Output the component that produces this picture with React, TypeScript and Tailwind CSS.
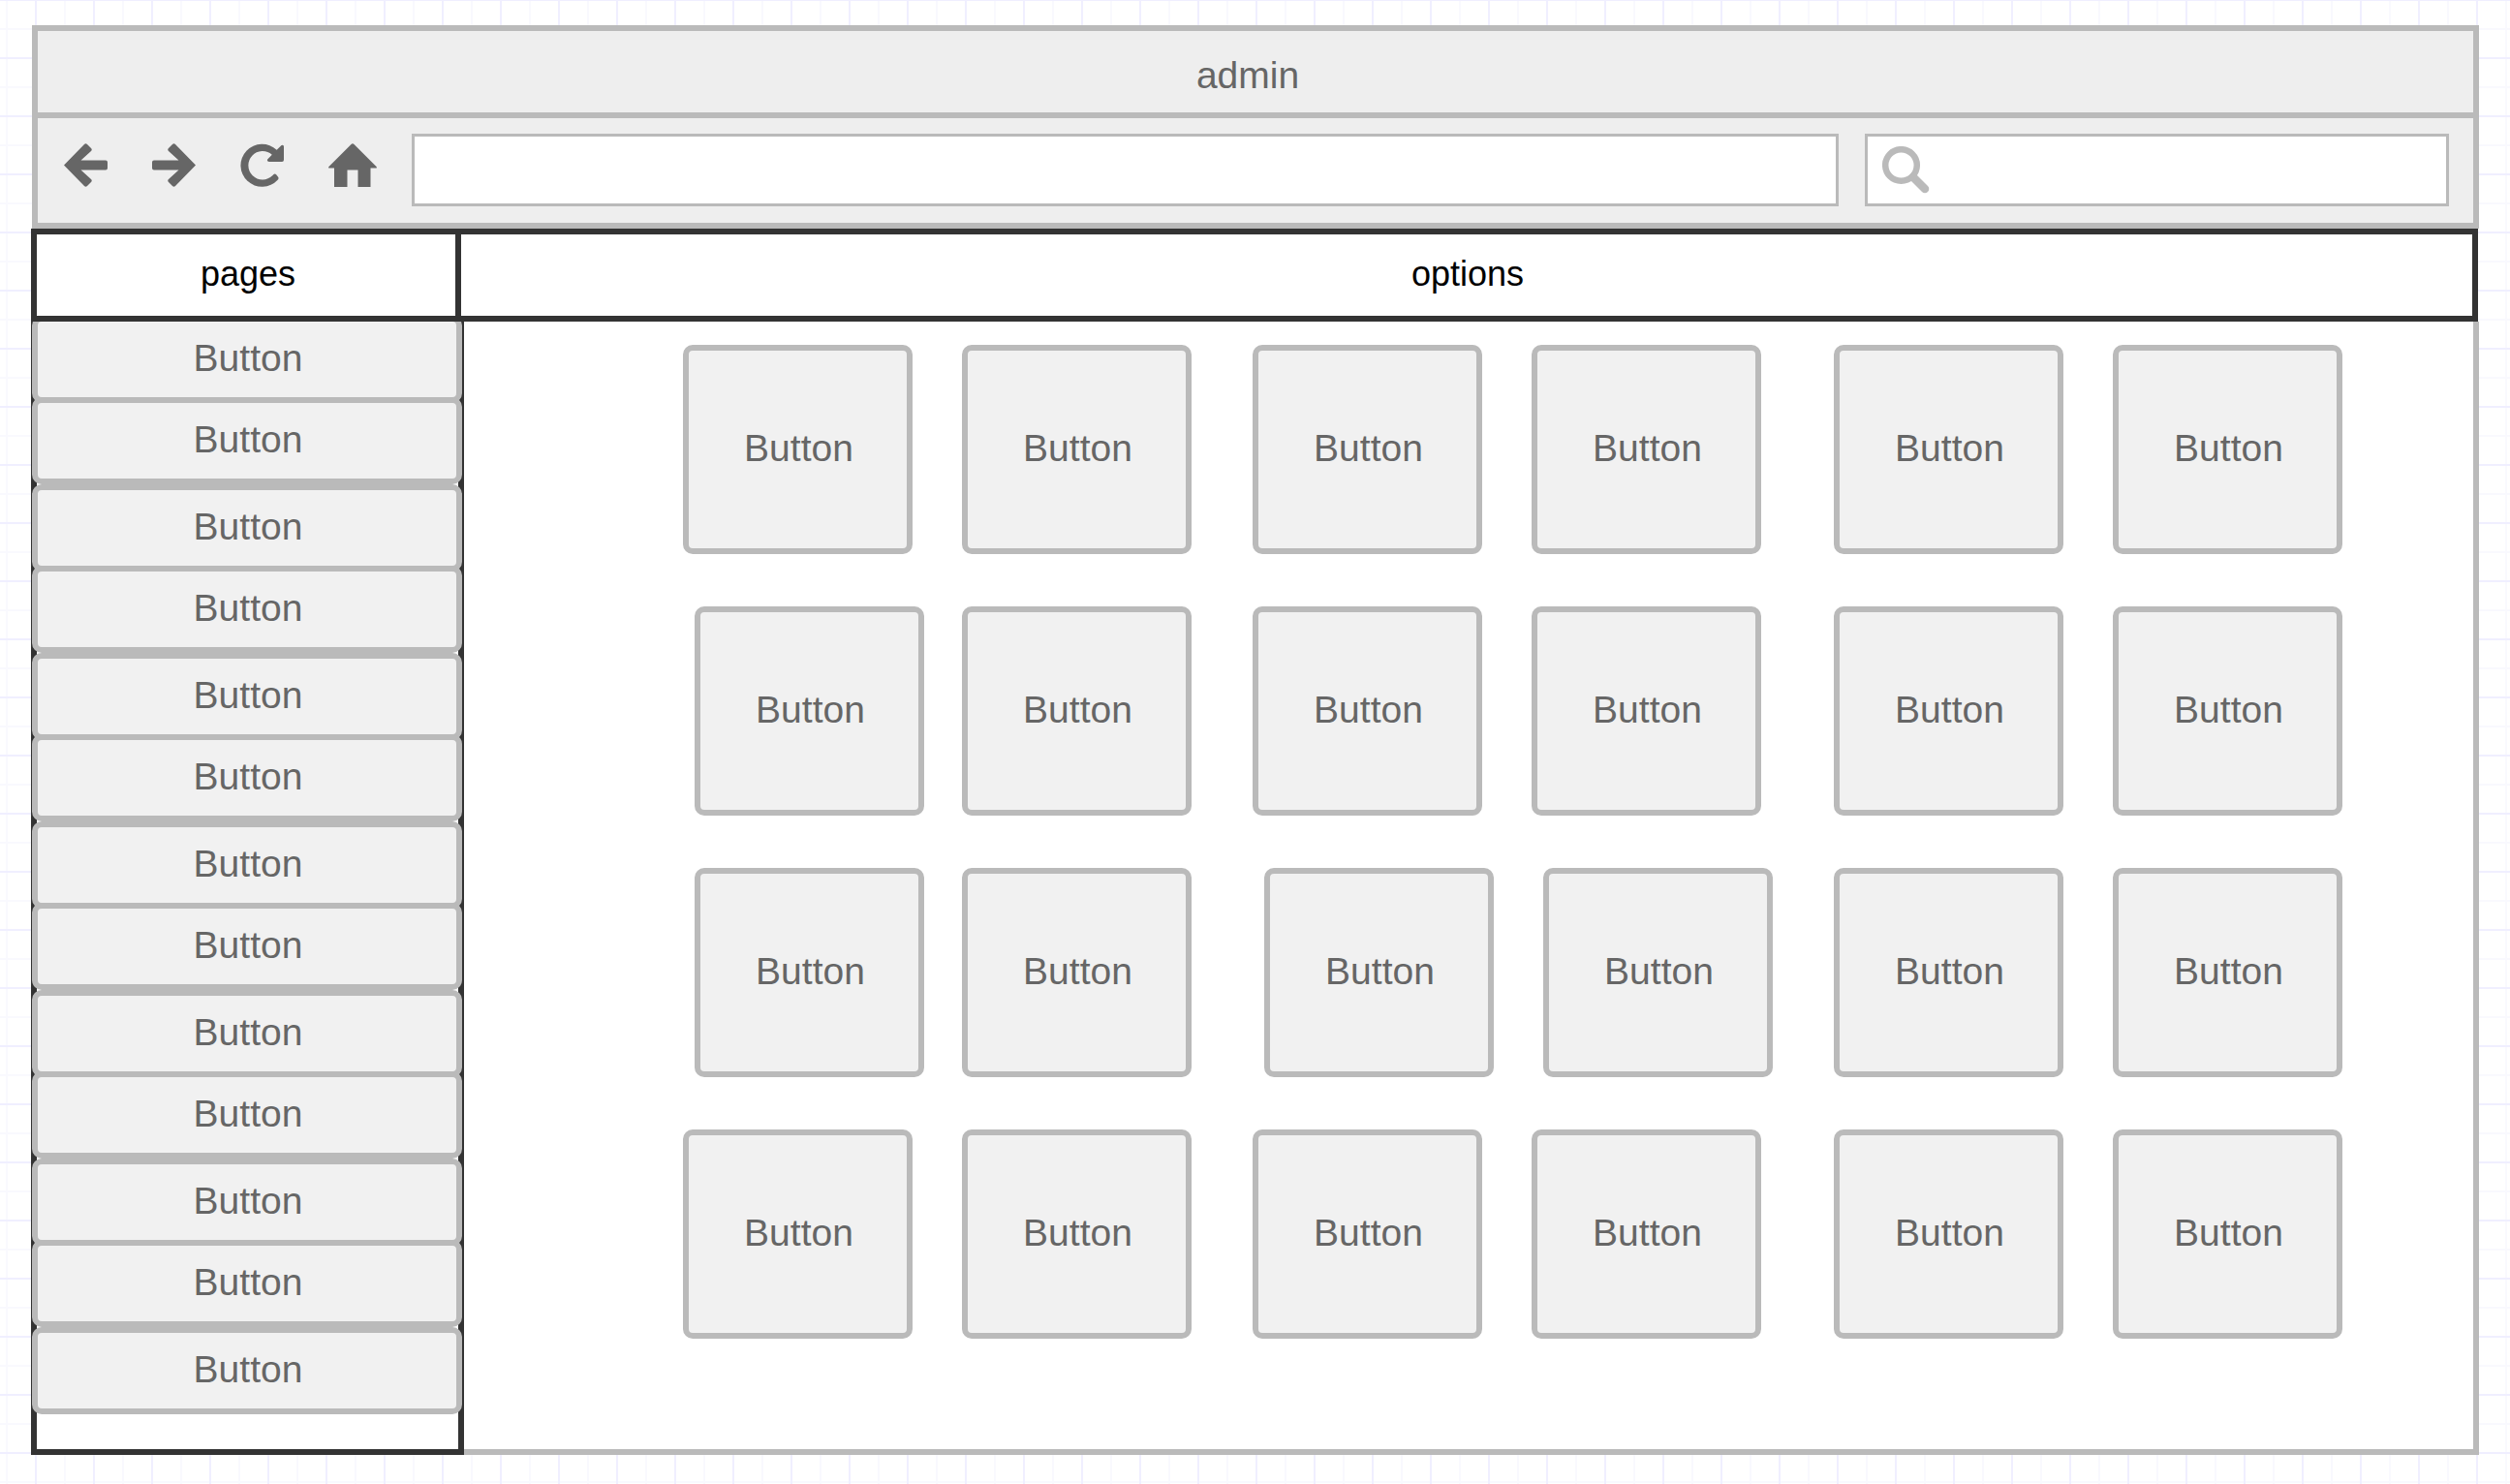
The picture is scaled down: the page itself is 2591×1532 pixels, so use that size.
import type { ReactNode } from "react";

const pages = Array.from({ length: 13 }, (_, i) => ({ id: i, label: "Button" }));

type Side = "start" | "end";

// Which side of its cell each option tile sits on.
const optionRows: Side[][] = [
  ["start", "start", "start", "start", "start", "start"],
  ["end", "start", "start", "start", "start", "start"],
  ["end", "start", "end", "end", "start", "start"],
  ["start", "start", "start", "start", "start", "start"],
];

function IconButton({ label, children }: { label: string; children: ReactNode }) {
  return (
    <button type="button" aria-label={label}>
      {children}
    </button>
  );
}

const arrowPath =
  "M0 22.500 21 1Q22.500-.5 24 1L28 5Q29.500 6.500 28 8L17.500 17.500H43Q45 17.500 45 19.500V25.500Q45 27.500 43 27.500H17.500L28 37Q29.500 38.500 28 40L24 44Q22.500 45.500 21 44Z";

export default function App() {
  return (
    <div className="min-h-screen bg-white bg-[linear-gradient(90deg,#f0efff_2px,transparent_2px),linear-gradient(#f0efff_2px,transparent_2px),linear-gradient(90deg,#f9f9fe_2px,transparent_2px),linear-gradient(#f9f9fe_2px,transparent_2px)] bg-[length:60px_60px] bg-[position:36px_0px,0px_59px,6px_0px,0px_29px] px-8 pt-[26px] pb-[30px] font-['Liberation_Sans',Arial,sans-serif] text-[39px] leading-[44px] text-[#666666]">
      <div className="flex min-h-[1476px] flex-col">
        <header className="ml-px border-6 border-b-0 border-[#bababa] bg-[#eeeeee]">
          <h1 className="flex h-[84px] items-center justify-center pt-2 pr-4">admin</h1>
          <div className="flex h-[120px] items-start border-y-6 border-[#bababa] pr-[25px] pl-[27px]">
            <nav aria-label="Browser" className="mt-[26px] flex items-start gap-[46px]">
              <IconButton label="Back">
                <svg viewBox="0 0 45 45" className="h-[45px] w-[45px]" fill="currentColor">
                  <path d={arrowPath} />
                </svg>
              </IconButton>
              <IconButton label="Forward">
                <svg viewBox="0 0 45 45" className="h-[45px] w-[45px] -scale-x-100" fill="currentColor">
                  <path d={arrowPath} />
                </svg>
              </IconButton>
              <IconButton label="Reload">
                <svg viewBox="0 0 46 45" className="h-[45px] w-[45px]" fill="currentColor">
                  <path d="M38.500 6.500 43.500 1.500Q46 .5 46 3V17Q46 19 44 19H30.500Q27.500 18.500 29 16L33.500 11.500A15 15 0 1 0 34 33.500L35 32.500Q36.500 31 38 32.500L40 35Q41 36.500 39.500 38A22.500 22.500 0 1 1 38.500 6.500Z" />
                </svg>
              </IconButton>
              <IconButton label="Home">
                <svg viewBox="0 0 50 45" className="h-[45px] w-[50px]" fill="currentColor">
                  <path d="M23.500 1Q25 -.5 26.500 1L49.500 24Q50.500 25.500 49 25.500H43.500V45H30.500V27.500H19.500V45H6V25.500H1Q-.5 25.500 .5 24Z" />
                </svg>
              </IconButton>
            </nav>
            <input
              type="text"
              aria-label="Address"
              className="mt-4 ml-9 h-[75px] min-w-0 flex-1 border-3 border-[#bababa] bg-white px-4 outline-none"
            />
            <div className="mt-4 ml-[27px] flex h-[75px] w-[603px] items-center border-3 border-[#bababa] bg-white pl-[15px]">
              <svg viewBox="0 0 49 49" className="h-[49px] w-[49px] shrink-0" fill="none" stroke="#bababa" aria-hidden="true">
                <circle cx="19.500" cy="19.500" r="16.300" strokeWidth="6.500" />
                <path d="M32 32 44 44" strokeWidth="8.500" strokeLinecap="round" />
              </svg>
              <input type="search" aria-label="Search" className="h-full min-w-0 flex-1 bg-transparent px-3 outline-none" />
            </div>
          </div>
        </header>

        <div className="relative z-10 mr-px flex h-24 text-[36px] text-black">
          <h2 className="flex w-[444px] items-center justify-center border-6 border-[#333333] bg-white pb-0.5 pl-1">pages</h2>
          <h2 className="-ml-1.5 flex flex-1 items-center justify-center border-6 border-[#333333] bg-white pb-0.5 pl-0.5">options</h2>
        </div>

        <div className="flex flex-1">
          <aside className="w-[447px] border-6 border-t-0 border-[#333333] bg-white">
            <ul className="-mt-3 -mr-1 -ml-[5px]">
              {pages.map((p) => (
                <li key={p.id} className="even:-mt-1.5 first:pt-1.5">
                  <button
                    type="button"
                    className="block h-[90px] w-full rounded-[10px] border-6 border-[#bababa] bg-[#f1f1f1] pb-0.5 pl-0.5"
                  >
                    {p.label}
                  </button>
                </li>
              ))}
            </ul>
          </aside>
          <main className="flex flex-1 flex-col gap-[54px] border-r-6 border-b-6 border-[#bababa] bg-white pt-6 pr-[135px] pl-[226px]">
            {optionRows.map((row, r) => (
              <div key={r} className="grid grid-cols-[288fr_300fr_288fr_312fr_288fr_237fr]">
                {row.map((side, c) => (
                  <div key={c} className={side === "end" ? "pl-3" : ""}>
                    <button
                      type="button"
                      className="block h-[216px] w-[237px] rounded-[10px] border-6 border-[#bababa] bg-[#f1f1f1] pb-0.5 pl-0.5"
                    >
                      Button
                    </button>
                  </div>
                ))}
              </div>
            ))}
          </main>
        </div>
      </div>
    </div>
  );
}
